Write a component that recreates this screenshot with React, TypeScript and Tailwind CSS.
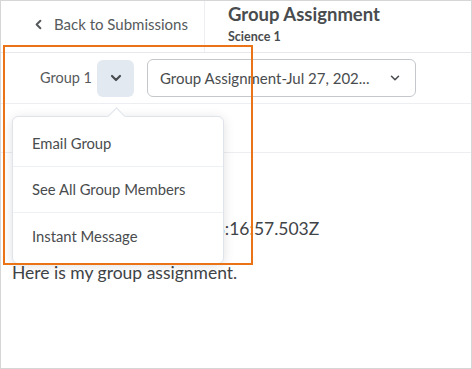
import { ChevronDown, ChevronLeft } from 'lucide-react'

const menuItems = ['Email Group', 'See All Group Members', 'Instant Message']

function GroupMenu() {
  return (
    <div className="absolute left-[11px] top-[115px] w-[212px] rounded-[6px] border border-[#dfe3ea] bg-white py-[4px] shadow-[0_2px_12px_rgba(0,0,0,0.12)]">
      <div className="absolute left-[97px] top-[-7px] h-[13px] w-[13px] rotate-45 border-l border-t border-[#dfe3ea] bg-white" />
      <ul className="relative">
        {menuItems.map((item, i) => (
          <li
            key={item}
            className={`flex h-[46px] items-center pl-[19px] text-[14.8px] text-[#494c4e] ${i < menuItems.length - 1 ? 'border-b border-[#edf0f4]' : ''}`}
          >
            {item}
          </li>
        ))}
      </ul>
    </div>
  )
}

export default function App() {
  return (
    <div
      className="relative h-[369px] w-[472px] overflow-hidden border border-[#d6d6d6] bg-white text-[#494c4e]"
      style={{ fontFamily: 'Lato, "Open Sans", sans-serif' }}
    >
      <header className="flex h-[52px] border-b border-[#e6e8eb]">
        <div className="flex w-[204px] items-center gap-[8px] border-r border-[#eceef1] pb-[4px] pl-[30px] text-[15px] text-[#565a5c]">
          <ChevronLeft size={15} strokeWidth={3.2} />
          <span>Back to Submissions</span>
        </div>
        <div className="flex flex-col pl-[23px]">
          <h1 className="text-[18.5px] font-bold leading-[26px] text-[#494c4e]">
            Group Assignment
          </h1>
          <p className="text-[12.5px] font-bold leading-[20px] text-[#494c4e]">
            Science 1
          </p>
        </div>
      </header>

      <div className="flex h-[51px] items-center border-b border-[#eceef1] pl-[39px]">
        <span className="text-[14.5px] text-[#565a5c]">Group 1</span>
        <button className="ml-[5px] flex h-[37px] w-[37px] items-center justify-center rounded-[6px] bg-[#e3e9f1] text-[#494c4e]">
          <ChevronDown size={16} strokeWidth={3.2} />
        </button>
        <div className="ml-[13px] flex h-[38px] w-[269px] items-center justify-between rounded-[6px] border border-[#c4c8cc] pl-[12px] pr-[13px] text-[15px] text-[#494c4e]">
          <span>Group Assignment-Jul 27, 202...</span>
          <ChevronDown size={14} strokeWidth={2.6} />
        </div>
      </div>

      <div className="h-[49px] border-b border-[#eceef1]" />

      <div className="px-[11px] pt-[65px] text-[17.5px] leading-[22px] text-[#3f4447]">
        <p className="pl-[88px]">2020-07-27T18:16:57.503Z</p>
        <p className="mt-[22px]">Here is my group assignment.</p>
      </div>

      <GroupMenu />

      <div className="pointer-events-none absolute left-[2px] top-[44px] h-[220px] w-[250px] border-2 border-[#ea7317]" />
    </div>
  )
}
